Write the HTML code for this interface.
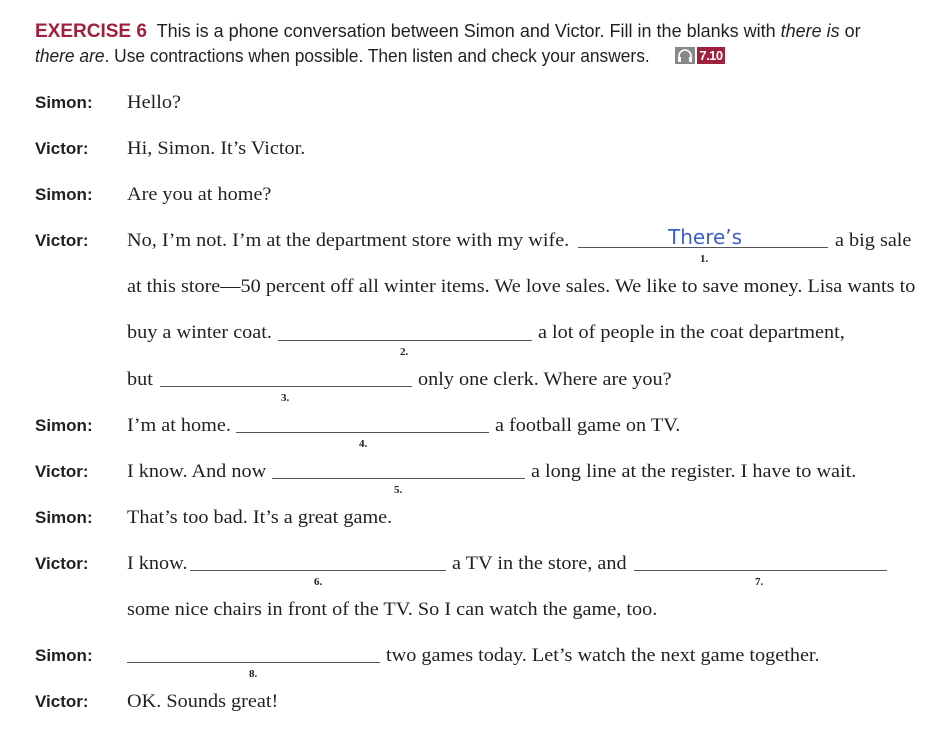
<!DOCTYPE html>
<html><head><meta charset="utf-8"><style>
body{margin:0;width:952px;height:735px;background:#fff;position:relative;overflow:hidden;color:#231f20}
.h{position:absolute;left:35px;font-family:"Liberation Sans",sans-serif;font-size:18px;white-space:nowrap;transform-origin:left center}
.s{position:absolute;left:35px;font-family:"Liberation Sans",sans-serif;font-weight:bold;font-size:17px}
.t{position:absolute;font-family:"Liberation Serif",serif;font-size:19px;white-space:nowrap;transform:scaleX(1.065);transform-origin:left center}
.b{position:absolute;height:1px;background:#555}
.n{position:absolute;font-family:"Liberation Serif",serif;font-weight:bold;font-size:11px}
</style></head><body>
<div class="h" style="top:21px;transform:scaleX(1.0)"><b style="color:#a0203d;font-size:19px">EXERCISE 6</b>&nbsp; This is a phone conversation between Simon and Victor. Fill in the blanks with <i>there is</i> or</div>
<div class="h" style="top:46px;transform:scaleX(0.965)"><i>there are</i>. Use contractions when possible. Then listen and check your answers.</div>
<div style="position:absolute;left:675px;top:47px;width:20px;height:17px;background:#888"></div>
<svg style="position:absolute;left:675px;top:47px" width="20" height="17" viewBox="0 0 20 17"><path d="M4 13 V9 A6 6 0 0 1 16 9 V13" fill="none" stroke="#fff" stroke-width="1.6"/><rect x="3" y="10" width="3" height="5" fill="#fff"/><rect x="14" y="10" width="3" height="5" fill="#fff"/></svg>
<div style="position:absolute;left:697px;top:47px;width:28px;height:17px;background:#a0203d;color:#fff;font-family:'Liberation Sans',sans-serif;font-weight:bold;font-size:13px;line-height:17px;text-align:center;letter-spacing:-0.5px">7.10</div>

<div class="s" style="top:93px">Simon:</div><div class="t" style="left:127px;top:92px">Hello?</div>
<div class="s" style="top:139px">Victor:</div><div class="t" style="left:127px;top:138px">Hi, Simon. It’s Victor.</div>
<div class="s" style="top:185px">Simon:</div><div class="t" style="left:127px;top:184px">Are you at home?</div>
<div class="s" style="top:231px">Victor:</div><div class="t" style="left:127px;top:230px">No, I’m not. I’m at the department store with my wife.</div>
<div class="b" style="left:578px;width:250px;top:247px"></div>
<div style="position:absolute;left:668px;top:225px;font-family:'DejaVu Sans',sans-serif;font-size:20px;color:#3a5fc8">There’s</div>
<div class="n" style="left:700px;top:253px">1.</div>
<div class="t" style="left:835px;top:230px">a big sale</div>
<div class="t" style="left:127px;top:276px">at this store—50 percent off all winter items. We love sales. We like to save money. Lisa wants to</div>
<div class="t" style="left:127px;top:322px">buy a winter coat.</div>
<div class="b" style="left:278px;width:254px;top:340px"></div><div class="n" style="left:400px;top:346px">2.</div>
<div class="t" style="left:538px;top:322px">a lot of people in the coat department,</div>
<div class="t" style="left:127px;top:369px">but</div>
<div class="b" style="left:160px;width:252px;top:386px"></div><div class="n" style="left:281px;top:392px">3.</div>
<div class="t" style="left:418px;top:369px">only one clerk. Where are you?</div>
<div class="s" style="top:416px">Simon:</div><div class="t" style="left:127px;top:415px">I’m at home.</div>
<div class="b" style="left:236px;width:253px;top:432px"></div><div class="n" style="left:359px;top:438px">4.</div>
<div class="t" style="left:495px;top:415px">a football game on TV.</div>
<div class="s" style="top:462px">Victor:</div><div class="t" style="left:127px;top:461px">I know. And now</div>
<div class="b" style="left:272px;width:253px;top:478px"></div><div class="n" style="left:394px;top:484px">5.</div>
<div class="t" style="left:531px;top:461px">a long line at the register. I have to wait.</div>
<div class="s" style="top:508px">Simon:</div><div class="t" style="left:127px;top:507px">That’s too bad. It’s a great game.</div>
<div class="s" style="top:554px">Victor:</div><div class="t" style="left:127px;top:553px">I know.</div>
<div class="b" style="left:190px;width:256px;top:570px"></div><div class="n" style="left:314px;top:576px">6.</div>
<div class="t" style="left:452px;top:553px">a TV in the store, and</div>
<div class="b" style="left:634px;width:253px;top:570px"></div><div class="n" style="left:755px;top:576px">7.</div>
<div class="t" style="left:127px;top:599px">some nice chairs in front of the TV. So I can watch the game, too.</div>
<div class="s" style="top:646px">Simon:</div>
<div class="b" style="left:127px;width:253px;top:662px"></div><div class="n" style="left:249px;top:668px">8.</div>
<div class="t" style="left:386px;top:645px">two games today. Let’s watch the next game together.</div>
<div class="s" style="top:692px">Victor:</div><div class="t" style="left:127px;top:691px">OK. Sounds great!</div>
</body></html>
